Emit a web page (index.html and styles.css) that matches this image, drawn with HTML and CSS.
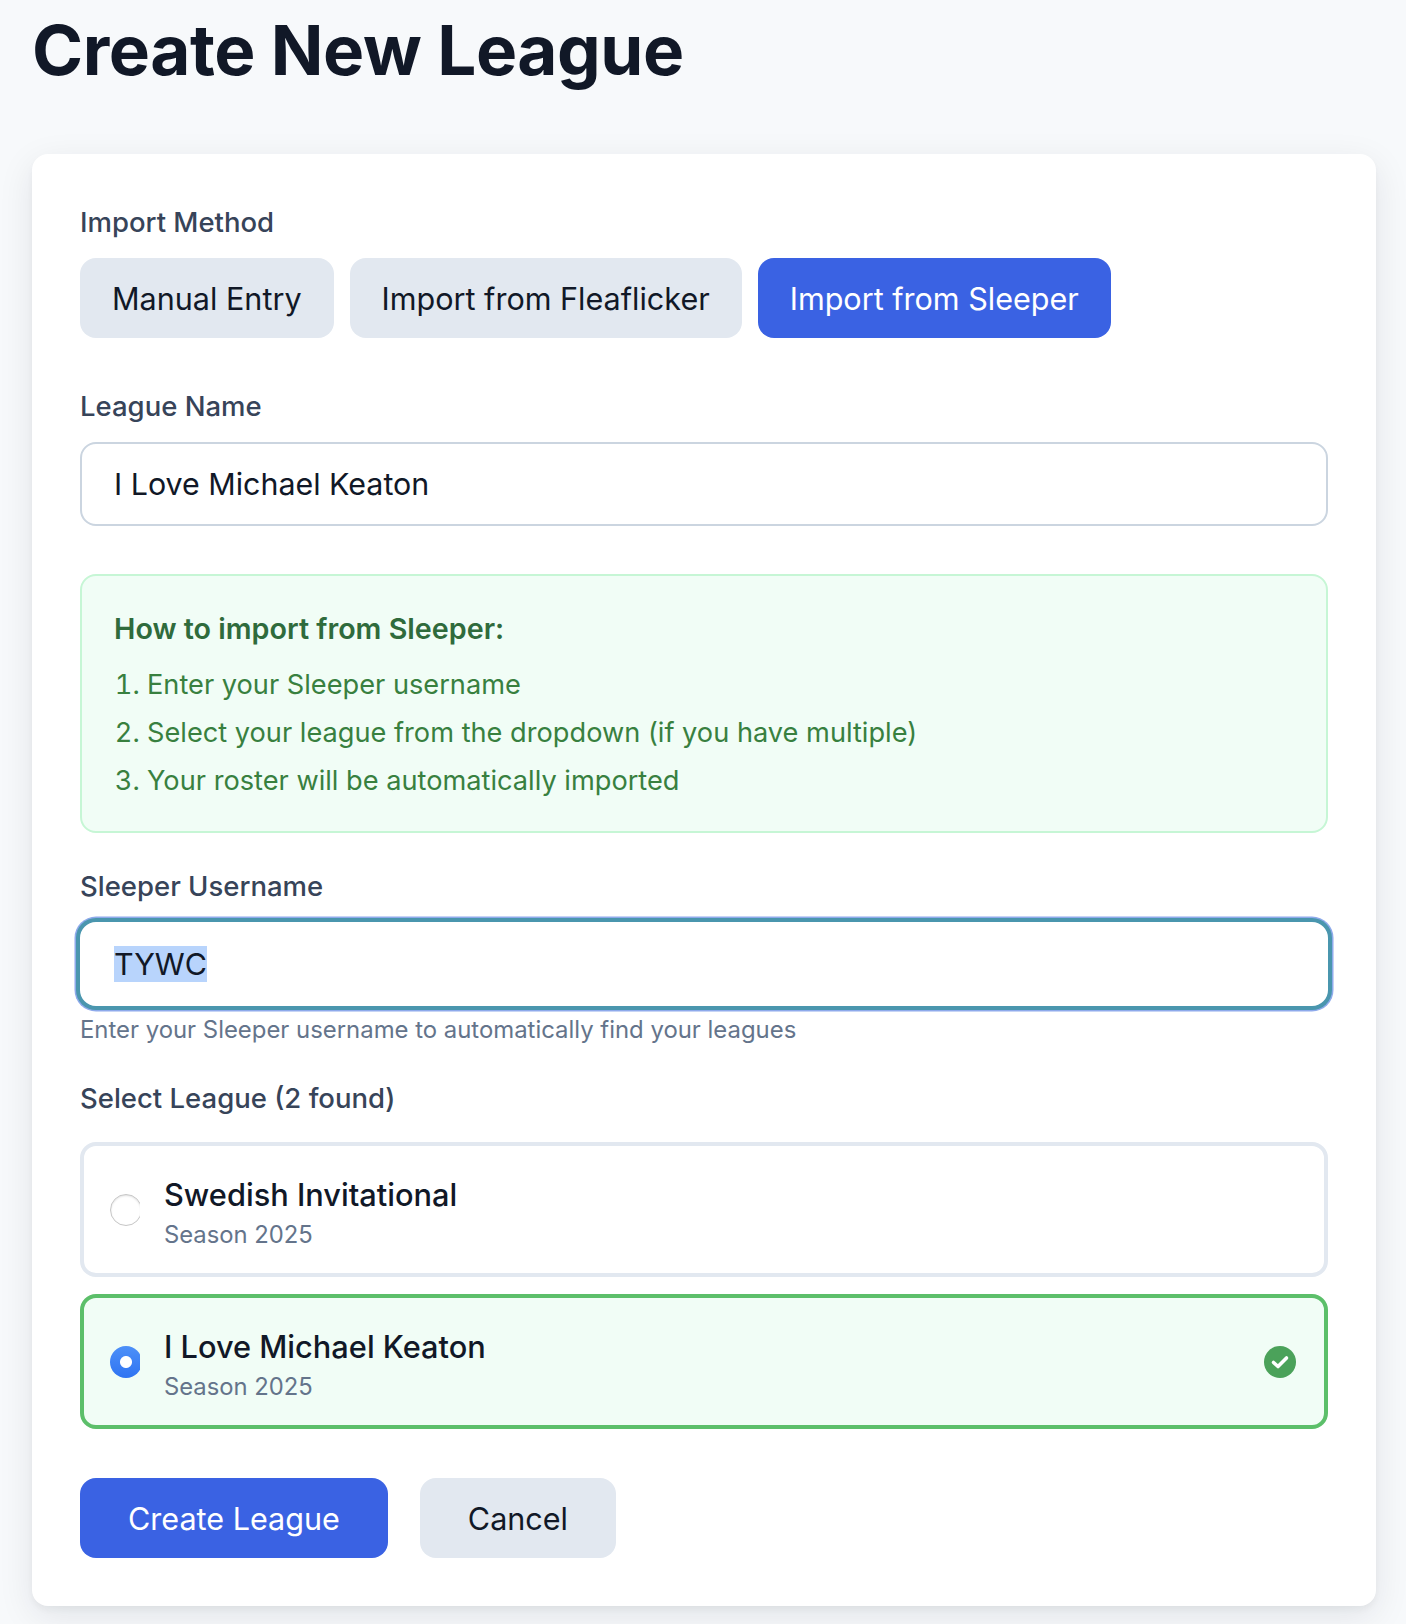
FILE: index.html
```html
<!DOCTYPE html>
<html lang="en">
<head>
<meta charset="utf-8">
<title>Create New League</title>
<link rel="stylesheet" href="styles.css">
</head>
<body>
<main class="page">
  <h1 class="title">Create New League</h1>
  <form class="card">
    <section class="group">
      <div class="label">Import Method</div>
      <div class="tabs">
        <button type="button" class="btn btn-grey">Manual Entry</button>
        <button type="button" class="btn btn-grey">Import from Fleaflicker</button>
        <button type="button" class="btn btn-blue">Import from Sleeper</button>
      </div>
    </section>
    <section class="group">
      <div class="label">League Name</div>
      <div class="field">I Love Michael Keaton</div>
    </section>
    <section class="help">
      <h2 class="help-title">How to import from Sleeper:</h2>
      <ol class="help-list">
        <li>Enter your Sleeper username</li>
        <li>Select your league from the dropdown (if you have multiple)</li>
        <li>Your roster will be automatically imported</li>
      </ol>
    </section>
    <section class="group group-user">
      <div class="label">Sleeper Username</div>
      <div class="field field-focus"><span class="selected">TYWC</span></div>
      <p class="hint">Enter your Sleeper username to automatically find your leagues</p>
    </section>
    <section class="group group-leagues">
      <div class="label label-leagues">Select League (2 found)</div>
      <div class="option">
        <span class="radio-clip"><span class="radio"></span></span>
        <div class="option-text">
          <div class="option-name">Swedish Invitational</div>
          <div class="option-season">Season 2025</div>
        </div>
      </div>
      <div class="option option-on">
        <span class="radio-clip"><span class="radio radio-on"></span></span>
        <div class="option-text">
          <div class="option-name">I Love Michael Keaton</div>
          <div class="option-season">Season 2025</div>
        </div>
        <svg class="check" viewBox="0 0 32 32" aria-hidden="true">
          <circle cx="16" cy="16" r="16" fill="#4ba25a"/>
          <path d="M9.5 16.5l4.5 4 8.5-8.5" fill="none" stroke="#fff" stroke-width="3.6" stroke-linecap="round" stroke-linejoin="round"/>
        </svg>
      </div>
    </section>
    <div class="actions">
      <button type="button" class="btn btn-blue btn-wide">Create League</button>
      <button type="button" class="btn btn-grey btn-wide">Cancel</button>
    </div>
  </form>
</main>
</body>
</html>
```
FILE: styles.css
```css
* { box-sizing: border-box; }
html, body { margin: 0; padding: 0; }
body {
  background: #f7f9fb;
  color: #111827;
  font-family: Inter, "Liberation Sans", sans-serif;
}
.page { padding: 0 30px 18px 32px; }
.title {
  margin: 0 0 38px;
  height: 116px;
  line-height: 101px;
  font-size: 69.2px;
  font-weight: 700;
  letter-spacing: -0.45px;
  color: #111827;
}
.card {
  background: #fff;
  border-radius: 16px;
  padding: 48px;
  box-shadow: 0 4px 6px rgba(0, 0, 0, 0.04), 0 10px 36px rgba(15, 23, 42, 0.09);
}
.group { margin-bottom: 48px; }
.label {
  font-size: 27.5px;
  line-height: 41px;
  font-weight: 500;
  color: #374459;
  margin-bottom: 15px;
}
.tabs { display: flex; gap: 16px; }
.btn {
  height: 80px;
  border: 0;
  border-radius: 16px;
  padding: 0 32px;
  font-family: inherit;
  font-size: 30.55px;
}
.btn-grey { background: #e2e8f0; color: #111827; }
.btn-blue { background: #3a62e3; color: #fff; }
.btn-wide { padding: 0 48px; }
.field {
  height: 84px;
  border: 2px solid #cbd5e0;
  border-radius: 16px;
  padding: 0 32px;
  display: flex;
  align-items: center;
  font-size: 30.4px;
  color: #111827;
  background: #fff;
}
.field-focus {
  border-color: #fff;
  box-shadow: 0 0 0 4px #4a96ae, 0 0 0 5.5px #8eaaeb;
}
.selected { background: #b8d4fc; line-height: 36px; }
.hint {
  margin: 7px 0 0;
  font-size: 23.9px;
  line-height: 34px;
  color: #64748b;
}
.help {
  background: #f1fdf6;
  border: 2px solid #c6f6d5;
  border-radius: 16px;
  padding: 33px 32px 27px;
  margin-bottom: 33px;
}
.help-title {
  margin: 0 0 12px;
  font-size: 28.7px;
  line-height: 40px;
  font-weight: 600;
  color: #2f6b3c;
}
.help-list {
  margin: 0;
  padding: 0 0 0 33px;
  font-size: 27.2px;
  line-height: 47.8px;
  color: #38803f;
}
.group-user { margin-bottom: 31px; }
.group-leagues { margin-bottom: 49px; }
.label-leagues { margin-bottom: 23px; }
.option {
  display: flex;
  align-items: center;
  height: 135px;
  border: 4px solid #e2e8f0;
  border-radius: 16px;
  padding: 0 26px;
  margin-bottom: 17px;
  background: #fff;
}
.option:last-child { margin-bottom: 0; }
.option-on { background: #f1fdf6; border-color: #5cbf6a; }
.radio-clip {
  flex: none;
  width: 30px;
  height: 32px;
  overflow: hidden;
  margin-right: 24px;
}
.radio {
  display: block;
  width: 32px;
  height: 32px;
  border-radius: 50%;
  border: 1px solid #c6c6c6;
  background: #fff;
  box-shadow: inset 0 1px 2px rgba(0, 0, 0, 0.12);
}
.radio-on {
  border: 0;
  box-shadow: none;
  background:
    radial-gradient(circle, #fff 5.5px, transparent 6.5px),
    linear-gradient(#4d90f8, #2f74f2);
}
.option-text { flex: 1; padding-top: 6px; }
.option-name { font-size: 30.75px; line-height: 44px; font-weight: 500; color: #111827; }
.option-season { font-size: 23.8px; line-height: 36px; color: #64748b; }
.check { flex: none; width: 32px; height: 32px; margin-right: 2px; }
.actions { display: flex; gap: 32px; }
```
